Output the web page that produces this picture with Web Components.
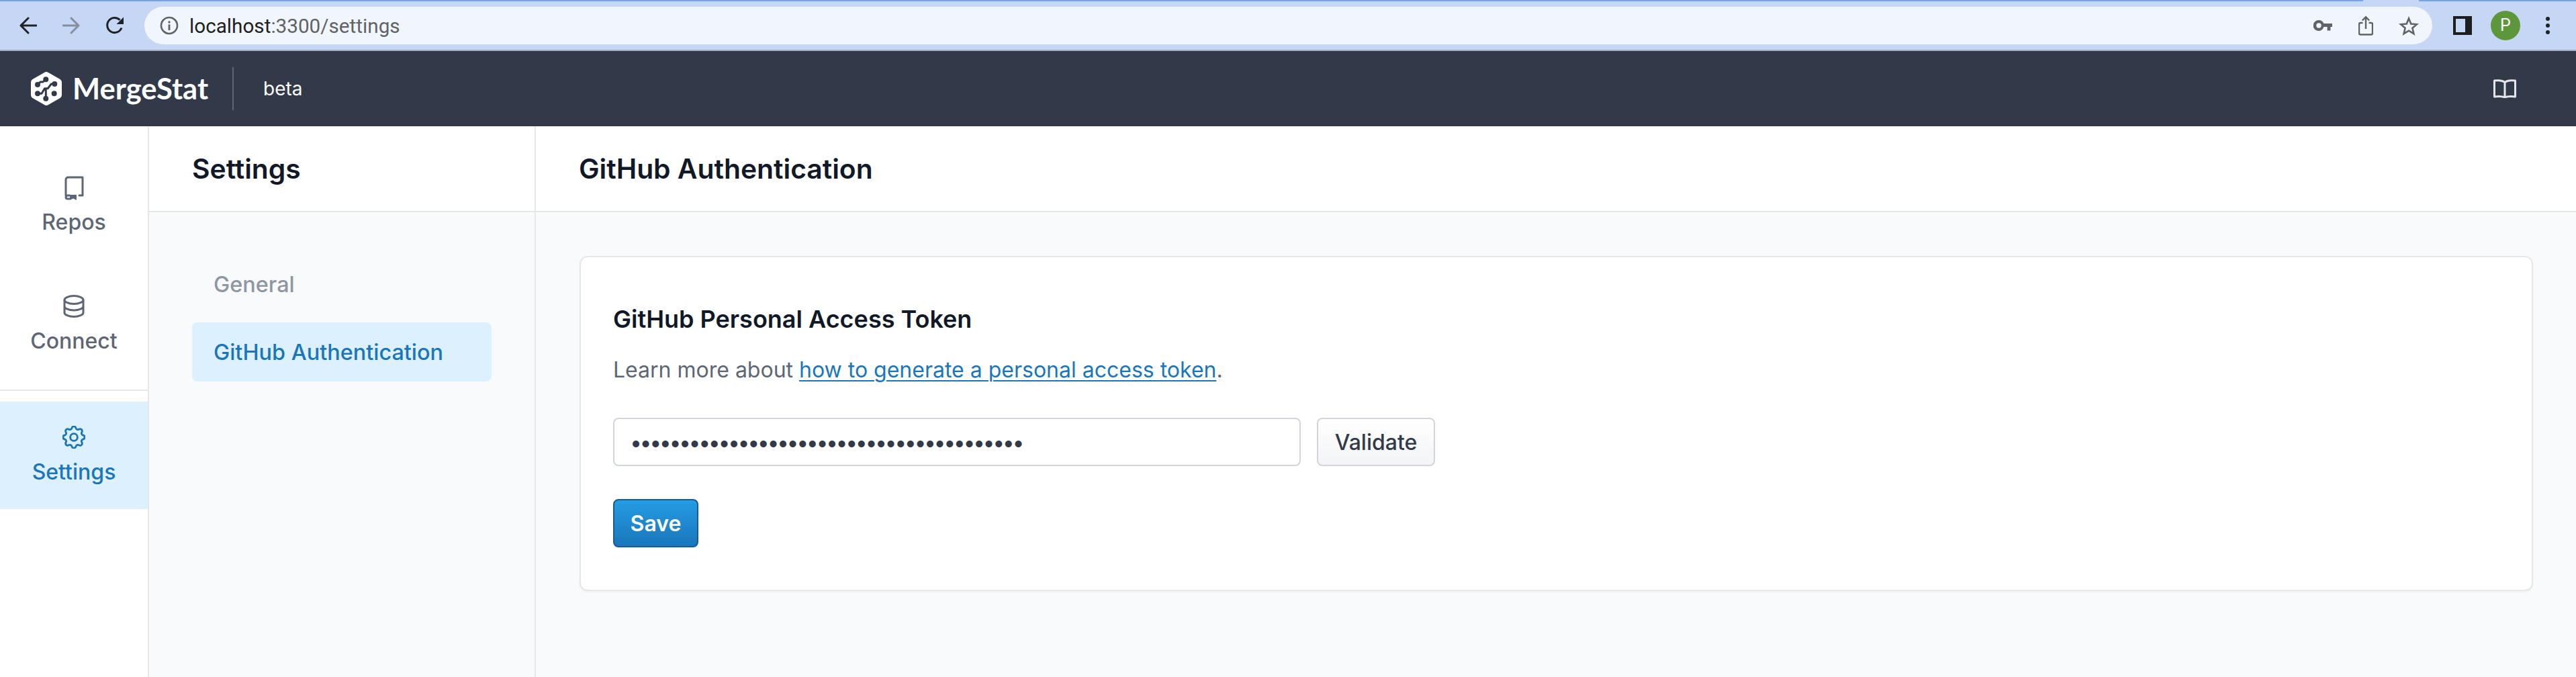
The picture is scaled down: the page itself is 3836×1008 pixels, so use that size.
<!DOCTYPE html>
<html><head><meta charset="utf-8">
<style>
html,body{margin:0;padding:0;height:100%;overflow:hidden;background:#f9fafb;font-family:Inter,"Liberation Sans",sans-serif}
body{display:flex;flex-direction:column;height:1008px}
</style></head><body>
<browser-bar></browser-bar>
<app-header></app-header>
<app-shell>
  <side-rail slot="rail"></side-rail>
  <sub-nav slot="nav"></sub-nav>
  <token-page slot="main"></token-page>
</app-shell>
<script>
function def(name, html){
  customElements.define(name, class extends HTMLElement{
    constructor(){super();this.attachShadow({mode:'open'}).innerHTML=html;}
  });
}
def('browser-bar',`<style>
:host{display:block;flex:none;height:76px;box-sizing:border-box;background:#c6d7f5;border-bottom:2px solid #a2adc0;position:relative}
.stripe{display:flex;height:2px}.stripe i{background:#7aa3e5;flex:1}.stripe b{width:83px;flex:none}.stripe i.r{flex:none;width:234px}
.row{display:flex;align-items:center;height:56px;margin-top:8px;padding-left:29px}
svg{display:block;flex:none}
.omni{margin-left:30px;width:3407px;height:56px;border-radius:28px;background:#f1f6fc;display:flex;align-items:center;padding-left:23px;box-sizing:border-box;flex:none}
.url{margin-left:16px;font:400 29.700px Roboto,sans-serif;color:#1f2023;flex:1;white-space:nowrap}
.url span{color:#5f6368}
.end{display:flex;align-items:center}
</style>
<div class="stripe"><i></i><b></b><i class="r"></i></div>
<div class="row">
<svg width="26" height="26" viewBox="0 0 26 26" fill="none" stroke="#202124" stroke-width="3" stroke-linecap="round" stroke-linejoin="round"><path d="M25 13H2M13 2 2 13l11 11"/></svg>
<svg style="margin-left:38px" width="26" height="26" viewBox="0 0 26 26" fill="none" stroke="#868d9c" stroke-width="3" stroke-linecap="round" stroke-linejoin="round"><path d="M1 13h23M13 2l11 11-11 11"/></svg>
<svg style="margin-left:38px" width="28" height="28" viewBox="0 0 28 28" fill="none"><path d="M24 17.500A11 11 0 1 1 21.500 5.800" stroke="#202124" stroke-width="3"/><path d="M27 1.500V12H16.500z" fill="#202124"/></svg>
<div class="omni">
<svg width="28" height="28" viewBox="0 0 28 28" fill="none"><circle cx="14" cy="14" r="12" stroke="#5f6368" stroke-width="2.600"/><circle cx="14" cy="9" r="1.700" fill="#5f6368"/><rect x="12.600" y="12.400" width="2.800" height="8.600" fill="#5f6368"/></svg>
<div class="url">localhost<span>:3300/settings</span></div>
<div class="end">
<svg width="28" height="16" viewBox="0 0 28 16"><path fill="#5f6368" fill-rule="evenodd" d="M8 0a8 8 0 0 1 7.400 5H28v5h-2.600v5.500h-4.800V10h-5.200A8 8 0 1 1 8 0zm0 4.300a3.700 3.700 0 1 0 0 7.400 3.700 3.700 0 0 0 0-7.400z"/></svg>
<svg style="margin-left:39px" width="22" height="30" viewBox="0 0 22 30" fill="none" stroke="#5f6368" stroke-width="2.400"><path d="M6.500 11H3a2 2 0 0 0-2 2v13.500a2 2 0 0 0 2 2h16a2 2 0 0 0 2-2V13a2 2 0 0 0-2-2h-3.500"/><path d="M11 20V2.500M5.800 7.500 11 2.300l5.200 5.200"/></svg>
<svg style="margin-left:38px" width="30" height="29" viewBox="0 0 30 29" fill="none" stroke="#5f6368" stroke-width="2.600" stroke-linejoin="miter"><path d="M15 3.500l3.300 8 8.600.7-6.500 5.600 2 8.400L15 21.700l-7.400 4.500 2-8.400-6.500-5.600 8.600-.7z"/></svg>
<div style="width:20px"></div>
</div>
</div>
<svg style="margin-left:31px" width="28" height="28" viewBox="0 0 28 28"><path fill="#1d1e20" fill-rule="evenodd" d="M0 0h28v28H0zM4 4v20h14V4z"/></svg>
<div style="margin-left:28px;width:44px;height:44px;border-radius:50%;background:#5e963c;color:#fff;font:400 25px/44px Roboto,sans-serif;text-align:center;flex:none">P</div>
<svg style="margin-left:38px" width="6" height="26" viewBox="0 0 6 26" fill="#202124"><circle cx="3" cy="3" r="3"/><circle cx="3" cy="13" r="3"/><circle cx="3" cy="23" r="3"/></svg>
</div>`);
def('app-header',`<style>
:host{display:flex;flex:none;height:112px;background:#323a49;align-items:center;padding:0 89px 0 46px;color:#fff}
svg{display:block;flex:none}
.word{font:700 43.500px Lato,sans-serif;margin-left:16px;line-height:1;width:203px;white-space:nowrap}
.sep{width:2px;height:64px;background:#5f6777;margin-left:35px}
.beta{font:400 28px Inter,sans-serif;margin-left:44px;flex:1}
</style>
<svg width="46" height="50" viewBox="0 0 46 50"><path fill="#fff" d="M20 .9a6 6 0 0 1 6 0l17 9.800a6 6 0 0 1 3 5.200v18.200a6 6 0 0 1-3 5.200l-17 9.800a6 6 0 0 1-6 0l-17-9.800a6 6 0 0 1-3-5.200V15.900a6 6 0 0 1 3-5.200z"/><g fill="none" stroke="#323a49" stroke-width="3" stroke-linecap="round" stroke-linejoin="round"><path d="M10 19l4-4h4l4-3.700M35.300 18h-5l-5 6.700h-4.800L16 32.300h-6M22.300 25v14.700"/></g><g fill="#323a49"><circle cx="22.300" cy="11.300" r="4"/><circle cx="10" cy="19" r="4"/><circle cx="35.300" cy="18" r="4"/><circle cx="10" cy="32.300" r="4"/><circle cx="34.700" cy="32.300" r="4"/><circle cx="22.300" cy="39.700" r="4"/></g></svg>
<div class="word">MergeStat</div><div class="sep"></div><div class="beta">beta</div>
<svg width="34" height="28" viewBox="0 0 34 28" fill="none" stroke="#e5e7eb" stroke-width="3" stroke-linejoin="round"><path d="M17 4.500C14 2 9.500 1 1.500 2v24c8-1 12.500-.3 15.500 1 3-1.300 7.500-2 15.500-1V2c-8-1-12.500 0-15.500 2.500zM17 4.500V27"/></svg>`);
def('app-shell',`<style>
:host{display:flex;flex:1;min-height:0}
::slotted(*){height:100%}
::slotted([slot=main]){flex:1;min-width:0}
</style><slot name="rail"></slot><slot name="nav"></slot><slot name="main"></slot>`);
def('rail-item',`<style>
:host{display:flex;flex-direction:column;align-items:center;box-sizing:border-box;height:160px;padding-top:var(--pt,0);color:var(--c,#5d6675);background:var(--bg,transparent);font:500 32px/40px Inter,sans-serif}
slot[name=icon]{display:block;height:36px}
.label{margin-top:13px}
</style><slot name="icon"></slot><div class="label"><slot></slot></div>`);
def('side-rail',`<style>
:host{display:block;box-sizing:border-box;width:222px;flex:none;background:#fff;border-right:2px solid #e5e7eb}
.top{height:394px;border-bottom:2px solid #e5e7eb;box-sizing:border-box;margin-bottom:16px;display:flex;flex-direction:column}
svg{display:block}
rail-item.a{--pt:74px;height:176px}
rail-item.b{--pt:75px;height:176px}
rail-item.c{--pt:36px;--c:#1a76ba;--bg:#ddf0fe;height:160px}
</style>
<div class="top">
<rail-item class="a"><svg slot="icon" width="30" height="36" viewBox="0 0 30 36" fill="none" stroke="#5d6675" stroke-width="3" stroke-linejoin="round" stroke-linecap="round"><path d="M3 29V5.500A3.500 3.500 0 0 1 6.500 2H28v27h-5M9 29H6a3 3 0 0 0-3 3v0a2.500 2.500 0 0 0 2.500 2H8"/><path d="M9 28h10v8l-5-2.500L9 36z" fill="#5d6675" stroke="none"/></svg>Repos</rail-item>
<rail-item class="b"><svg slot="icon" width="32" height="34" viewBox="0 0 32 34" fill="none" stroke="#5d6675" stroke-width="3"><ellipse cx="16" cy="7.500" rx="14" ry="6"/><path d="M2 7.500v19c0 3.300 6.300 6 14 6s14-2.700 14-6v-19M2 17c0 3.300 6.300 6 14 6s14-2.700 14-6"/></svg>Connect</rail-item>
</div>
<rail-item class="c"><svg slot="icon" width="34" height="34" viewBox="2.500 2.500 19 19" fill="none" stroke="#1a76ba" stroke-width="1.600" stroke-linecap="round" stroke-linejoin="round"><path d="M10.325 4.317c.426-1.756 2.924-1.756 3.350 0a1.724 1.724 0 0 0 2.573 1.066c1.543-.940 3.310.826 2.370 2.370a1.724 1.724 0 0 0 1.065 2.572c1.756.426 1.756 2.924 0 3.350a1.724 1.724 0 0 0-1.066 2.573c.940 1.543-.826 3.310-2.370 2.370a1.724 1.724 0 0 0-2.572 1.065c-.426 1.756-2.924 1.756-3.350 0a1.724 1.724 0 0 0-2.573-1.066c-1.543.940-3.310-.826-2.370-2.370a1.724 1.724 0 0 0-1.065-2.572c-1.756-.426-1.756-2.924 0-3.350a1.724 1.724 0 0 0 1.066-2.573c-.940-1.543.826-3.310 2.370-2.370.996.608 2.296.070 2.572-1.065z"/><circle cx="12" cy="12" r="3"/></svg>Settings</rail-item>`);
def('page-title',`<style>
:host{display:flex;align-items:center;box-sizing:border-box;height:128px;padding-left:var(--pl,64px);background:#fff;border-bottom:2px solid #e5e7eb;font:600 40.800px Inter,sans-serif;color:#111827;flex:none}
</style><slot></slot>`);
def('sub-nav',`<style>
:host{display:flex;flex-direction:column;box-sizing:border-box;width:576px;flex:none;border-right:2px solid #e5e7eb;background:#f9fafb}
.list{padding:63px 64px 0;display:flex;flex-direction:column;gap:13px}
a{display:flex;align-items:center;height:88px;padding-left:32px;border-radius:8px;font:500 32.400px Inter,sans-serif;color:#8f96a3}
a.on{background:#ddf0fe;color:#1a76ba}
</style><page-title>Settings</page-title>
<div class="list"><a>General</a><a class="on">GitHub Authentication</a></div>`);
def('token-page',`<style>
:host{display:flex;flex-direction:column;background:#f9fafb}
.body{padding:65px 64px 0 65px}
.card{box-sizing:border-box;height:499px;background:#fff;border:2px solid #e5e7eb;border-radius:12px;box-shadow:0 2px 3px rgba(0,0,0,.04);padding:70px 48px 0}
h2{margin:0;font:600 36px/44px Inter,sans-serif;color:#111827}
p{margin:32px 0 0;font:400 32px/44px Inter,sans-serif;color:#5d6675}
p a{color:#1a76ba;text-decoration:underline;text-underline-offset:4px;text-decoration-thickness:2px}
.row{display:flex;gap:24px;margin-top:49px}
.input{box-sizing:border-box;width:1024px;height:72px;border:2px solid #d1d5db;border-radius:8px;background:#fff;padding-left:23px;display:flex;align-items:center;font:400 32px Inter,sans-serif;color:#323a49;letter-spacing:-3.400px;white-space:nowrap;overflow:hidden}
button{box-sizing:border-box;font:500 32px Inter,sans-serif;border-radius:8px;padding:0;height:72px}
.v{width:176px;background:linear-gradient(#fff,#f3f4f6);border:2px solid #d1d5db;color:#323a49}
.s{display:block;margin-top:49px;width:127px;background:linear-gradient(#249ce4,#1a76ba);border:2px solid #155d96;color:#fff;font-weight:600}
</style><page-title>GitHub Authentication</page-title>
<div class="body"><div class="card">
<h2>GitHub Personal Access Token</h2>
<p>Learn more about <a>how to generate a personal access token</a>.</p>
<div class="row"><div class="input">••••••••••••••••••••••••••••••••••••••••</div><button class="v">Validate</button></div>
<button class="s">Save</button>
</div></div>`);
</script>
</body></html>
